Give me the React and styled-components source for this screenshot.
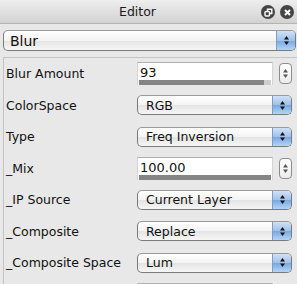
import React from 'react';
import styled, { createGlobalStyle } from 'styled-components';

const GlobalStyle = createGlobalStyle`
  html, body {
    margin: 0;
    padding: 0;
    background: #e8e8e8;
    overflow: hidden;
  }
  body {
    font-family: "Lucida Grande", "DejaVu Sans", "Liberation Sans", sans-serif;
  }
`;

const rows = [
  { label: 'Blur Amount', kind: 'number', value: '93', fill: 0.95 },
  { label: 'ColorSpace', kind: 'select', value: 'RGB' },
  { label: 'Type', kind: 'select', value: 'Freq Inversion' },
  { label: '_Mix', kind: 'number', value: '100.00', fill: 1 },
  { label: '_IP Source', kind: 'select', value: 'Current Layer' },
  { label: '_Composite', kind: 'select', value: 'Replace' },
  { label: '_Composite Space', kind: 'select', value: 'Lum' },
];

const Window = styled.div`
  width: 297px;
  height: 284px;
  display: flex;
  flex-direction: column;
  background: #e8e8e8;
  overflow: hidden;
`;

const TitleBar = styled.div`
  height: 24px;
  flex: none;
  position: relative;
  display: flex;
  align-items: center;
  justify-content: center;
  background: linear-gradient(#eeeeee, #d2d2d2);
  border-bottom: 1px solid #b4b4b4;
  box-sizing: border-box;
  font-size: 12.5px;
  color: #1a1a1a;
  padding-right: 22px;
`;

const TitleButtons = styled.div`
  position: absolute;
  right: 3px;
  top: 5px;
  display: flex;
  gap: 5px;
`;

const RoundButton = styled.div`
  width: 14px;
  height: 14px;
  border-radius: 50%;
  background: #454545;
  display: flex;
  align-items: center;
  justify-content: center;
`;

const Header = styled.div`
  padding: 6px 1px 0 3px;
  flex: none;
`;

const SelectBox = styled.div`
  height: ${(p) => (p.$big ? 21 : 20)}px;
  display: flex;
  align-items: stretch;
  box-sizing: border-box;
  border: 1px solid #7a7a7a;
  border-top-color: #9a9a9a;
  border-radius: 5px;
  background: linear-gradient(#ffffff, #f3f3f3 50%, #e4e4e4 51%, #f6f6f6);
  overflow: hidden;
`;

const SelectText = styled.div`
  flex: 1;
  display: flex;
  align-items: center;
  padding-left: ${(p) => (p.$big ? 6 : 8)}px;
  font-size: ${(p) => (p.$big ? 14 : 12.5)}px;
  color: #111;
`;

const BlueStep = styled.div`
  width: 18px;
  flex: none;
  border-left: 1px solid #7f9dc4;
  background: linear-gradient(#cfe1f6, #9fc1ea 50%, #78a8e2 51%, #b4d4f6);
  display: flex;
  align-items: center;
  justify-content: center;
`;

const Panel = styled.div`
  margin: 6px 0 0 3px;
  border-top: 1px solid #c4c4c4;
  border-left: 1px solid #c4c4c4;
  flex: 1;
  padding: 0 5px 0 2px;
`;

const Row = styled.div`
  height: 31.5px;
  display: grid;
  grid-template-columns: 131px 1fr;
  align-items: center;
`;

const Label = styled.div`
  font-size: 12.5px;
  color: #111;
  white-space: nowrap;
`;

const NumberWrap = styled.div`
  display: flex;
  align-items: center;
  gap: 6px;
`;

const Field = styled.div`
  width: 136px;
  height: 23px;
  box-sizing: border-box;
  background: #fff;
  border-top: 1px solid #b0b0b0;
  border-left: 1px solid #d4d4d4;
  border-right: 1px solid #d4d4d4;
  display: flex;
  flex-direction: column;
`;

const FieldText = styled.div`
  flex: 1;
  font-size: 13px;
  color: #111;
  padding: 3px 0 0 2px;
  line-height: 14px;
`;

const Track = styled.div`
  flex: none;
  height: 5px;
  margin: 0 0 2px 1px;
  width: 132px;
  background: #cdcdcd;
`;

const TrackFill = styled.div`
  height: 100%;
  background: #858585;
`;

const Stepper = styled.div`
  width: 13px;
  height: 21px;
  box-sizing: border-box;
  border: 1px solid #8c8c8c;
  border-radius: 4px;
  background: linear-gradient(#ffffff, #ececec);
  display: flex;
  align-items: center;
  justify-content: center;
`;

const Arrows = ({ color = '#111' }) => (
  <svg width="7" height="11" viewBox="0 0 7 11">
    <path d="M3.5 1 L6 4.5 L1 4.5 Z" fill={color} />
    <path d="M3.5 10 L6 6.5 L1 6.5 Z" fill={color} />
  </svg>
);

const Select = ({ value, big }) => (
  <SelectBox $big={big}>
    <SelectText $big={big}>{value}</SelectText>
    <BlueStep>
      <Arrows />
    </BlueStep>
  </SelectBox>
);

const NumberField = ({ value, fill }) => (
  <NumberWrap>
    <Field>
      <FieldText>{value}</FieldText>
      <Track>
        <TrackFill style={{ width: `${fill * 100}%` }} />
      </Track>
    </Field>
    <Stepper>
      <Arrows color="#555" />
    </Stepper>
  </NumberWrap>
);

export default function App() {
  return (
    <>
      <GlobalStyle />
      <Window>
        <TitleBar>
          Editor
          <TitleButtons>
            <RoundButton>
              <svg width="9" height="9" viewBox="0 0 9 9">
                <rect x="1" y="3.5" width="4.5" height="4.5" rx="1" fill="none" stroke="#fff" strokeWidth="1.4" />
                <path d="M3.5 3 V1.2 H7.8 V5.5 H6" fill="none" stroke="#fff" strokeWidth="1.4" />
              </svg>
            </RoundButton>
            <RoundButton>
              <svg width="9" height="9" viewBox="0 0 9 9">
                <path d="M2 2 L7 7 M7 2 L2 7" stroke="#fff" strokeWidth="2" />
              </svg>
            </RoundButton>
          </TitleButtons>
        </TitleBar>
        <Header>
          <Select value="Blur" big />
        </Header>
        <Panel>
          {rows.map((r) => (
            <Row key={r.label}>
              <Label>{r.label}</Label>
              {r.kind === 'select' ? (
                <Select value={r.value} />
              ) : (
                <NumberField value={r.value} fill={r.fill} />
              )}
            </Row>
          ))}
          <Row>
            <Label />
            <NumberField value="" fill={0} />
          </Row>
        </Panel>
      </Window>
    </>
  );
}
